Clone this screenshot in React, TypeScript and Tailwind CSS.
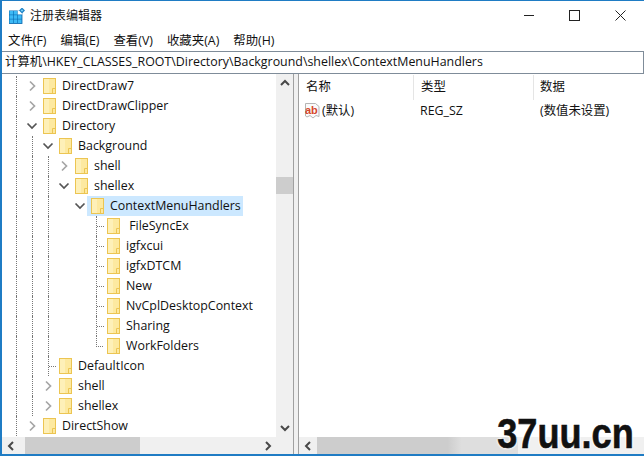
const font = "font-['Open_Sans','Noto_Sans_CJK_SC',sans-serif]";

function Folder() {
  return (
    <svg width="13" height="16" viewBox="0 0 13 16" className="shrink-0">
      <rect x="0.5" y="0.5" width="12" height="15" fill="#fde9a0" stroke="#ecc552" />
      <rect x="1" y="1" width="5" height="14" fill="#fef0b8" />
      <path d="M9.5 15V10.5H12.5" fill="none" stroke="#ecc552" />
    </svg>
  );
}

function Chevron({ open }: { open?: boolean }) {
  return (
    <svg width="16" height="16" viewBox="0 0 16 16" className="block bg-white">
      {open ? (
        <path d="M3.5 5.5L8 10L12.5 5.5" fill="none" stroke="#555" strokeWidth="1.7" />
      ) : (
        <path d="M6 3.5L10.5 8L6 12.5" fill="none" stroke="#a6a6a6" strokeWidth="1.7" />
      )}
    </svg>
  );
}

type Row = {
  label: string;
  level: number;
  guides: number[];
  state?: "open" | "closed" | "leaf";
  selected?: boolean;
  last?: boolean;
};

const rows: Row[] = [
  { label: "DirectDraw7", level: 0, guides: [0], state: "closed" },
  { label: "DirectDrawClipper", level: 0, guides: [0], state: "closed" },
  { label: "Directory", level: 0, guides: [0], state: "open" },
  { label: "Background", level: 1, guides: [0, 1], state: "open" },
  { label: "shell", level: 2, guides: [0, 1, 2], state: "closed" },
  { label: "shellex", level: 2, guides: [0, 1, 2], state: "open" },
  { label: "ContextMenuHandlers", level: 3, guides: [0, 1, 2], state: "open", selected: true },
  { label: "\u00a0FileSyncEx", level: 4, guides: [0, 1, 2], state: "leaf" },
  { label: "igfxcui", level: 4, guides: [0, 1, 2], state: "leaf" },
  { label: "igfxDTCM", level: 4, guides: [0, 1, 2], state: "leaf" },
  { label: "New", level: 4, guides: [0, 1, 2], state: "leaf" },
  { label: "NvCplDesktopContext", level: 4, guides: [0, 1, 2], state: "leaf" },
  { label: "Sharing", level: 4, guides: [0, 1, 2], state: "leaf" },
  { label: "WorkFolders", level: 4, guides: [0, 1, 2], state: "leaf", last: true },
  { label: "DefaultIcon", level: 1, guides: [0, 1], state: "leaf" },
  { label: "shell", level: 1, guides: [0, 1], state: "closed" },
  { label: "shellex", level: 1, guides: [0, 1], state: "closed" },
  { label: "DirectShow", level: 0, guides: [0], state: "closed" },
];

function TreeRow({ row }: { row: Row }) {
  const cells = [];
  for (let i = 0; i <= row.level; i++) {
    cells.push(
      <div key={i} className="w-4 h-5 shrink-0">
        {row.guides.includes(i) && <div className="ml-2 w-0 h-5 border-l border-dotted border-[#777]" />}
      </div>
    );
  }
  return (
    <div className="flex h-5 items-center pl-[6px] text-[12.4px] text-[#111]">
      {cells}
      <div className="w-4 h-5 shrink-0 flex items-center justify-center">
        {row.state === "open" && <Chevron open />}
        {row.state === "closed" && <Chevron />}
        {row.state === "leaf" && (
          <div className="w-4 h-5 shrink-0 pl-2">
            <div
              className={
                row.last
                  ? "w-[7px] h-[11px] border-l border-b border-dotted border-[#777]"
                  : "w-[7px] h-5 border-l border-dotted border-[#777]"
              }
            >
              {!row.last && <div className="w-[7px] h-[11px] border-b border-dotted border-[#777]" />}
            </div>
          </div>
        )}
      </div>
      <div className={row.selected ? "flex h-5 items-center -ml-[1px] pl-[4px] pr-[2px] bg-[#cce8ff]" : "flex h-5 items-center ml-[3px]"}>
        <Folder />
        <span className="ml-[6px] whitespace-nowrap leading-5">{row.label}</span>
      </div>
    </div>
  );
}

function Arrow({ dir }: { dir: "u" | "d" | "l" | "r" }) {
  const d = {
    u: "M2 8L6 4L10 8",
    d: "M2 4L6 8L10 4",
    l: "M8 2L4 6L8 10",
    r: "M4 2L8 6L4 10",
  }[dir];
  return (
    <svg width="12" height="12" viewBox="0 0 12 12" className="shrink-0">
      <path d={d} fill="none" stroke="#484848" strokeWidth="2" />
    </svg>
  );
}

function RegIcon() {
  return (
    <svg width="16" height="16" viewBox="0 0 16 16" className="shrink-0">
      <path d="M1.5 0.5H11.5L15 3.5V13.5L12 12.5L9 15L6 12.5L3 14L1.5 13Z" fill="#fafafa" stroke="#b5b5b5" />
      <text x="1" y="10.5" fontSize="11" fontWeight="700" fill="#d6472c" fontFamily="'Liberation Sans',sans-serif">ab</text>
    </svg>
  );
}

function AppIcon() {
  const cells = [];
  for (let y = 0; y < 3; y++) {
    for (let x = 0; x < 3; x++) {
      if (y === 0 && x === 2) continue;
      cells.push(<rect key={`${x}${y}`} x={0.5 + x * 4.2} y={3 + y * 4.2} width="3.6" height="3.6" fill="#3db9f5" />);
    }
  }
  return (
    <svg width="16" height="16" viewBox="0 0 16 16" className="shrink-0">
      <rect x="0" y="2.5" width="13.4" height="13.4" fill="#0b6cb3" />
      <rect x="8.6" y="2.5" width="4.8" height="4" fill="#ffffff" />
      {cells}
      <path d="M13 -0.5L16 2.5L13 5.5L10 2.5Z" fill="#1d82c6" />
      <path d="M13 1.2L14.3 2.5L13 3.8L11.7 2.5Z" fill="#7fd0f7" />
    </svg>
  );
}

export default function App() {
  return (
    <div className={`${font} relative w-[644px] h-[456px] overflow-hidden bg-white border-t border-l-2 border-[#1f7cc4] text-[#111]`}>
      <div className="flex h-[30px] items-center pl-[7px]">
        <AppIcon />
        <span className="ml-[5px] text-[12px] leading-none">注册表编辑器</span>
        <div className="ml-auto flex items-center pr-[18px] -mt-[1px]">
          <div className="w-[10px] h-px bg-[#222] mr-[35px]" />
          <div className="w-[11px] h-[11px] border border-[#222] mr-[35px]" />
          <svg width="11" height="11" viewBox="0 0 11 11">
            <path d="M0.5 0.5L10.5 10.5M10.5 0.5L0.5 10.5" stroke="#222" />
          </svg>
        </div>
      </div>
      <div className="flex h-5 items-center pl-[6px] gap-[14px] text-[12.4px] pt-px">
        <span>文件(F)</span>
        <span>编辑(E)</span>
        <span>查看(V)</span>
        <span>收藏夹(A)</span>
        <span>帮助(H)</span>
      </div>
      <div className="flex h-[23px] items-center border border-[#7f8c99] pl-1 text-[12.4px] whitespace-nowrap -ml-[2px]">
        计算机\HKEY_CLASSES_ROOT\Directory\Background\shellex\ContextMenuHandlers
      </div>
      <div className="flex h-[380px] bg-[#f0f0f0]">
        <div className="flex w-[291px] shrink-0">
          <div className="flex flex-col w-[291px]">
            <div className="flex h-[363px]">
              <div className="w-[274px] bg-white overflow-hidden pt-[2px]">
                {rows.map((r, i) => (
                  <TreeRow key={i} row={r} />
                ))}
              </div>
              <div className="flex-1 flex flex-col items-center py-[3px] bg-[#f0f0f0]">
                <Arrow dir="u" />
                <div className="h-[88px] shrink-0" />
                <div className="w-full h-[17px] bg-[#cdcdcd] shrink-0" />
                <div className="flex-1" />
                <Arrow dir="d" />
              </div>
            </div>
            <div className="flex h-[17px] items-center pl-[3px] pr-[19px] bg-[#f0f0f0]">
              <Arrow dir="l" />
              <div className="ml-[8px] w-[115px] h-full bg-[#cdcdcd]" />
              <div className="flex-1" />
              <Arrow dir="r" />
            </div>
          </div>
        </div>
        <div className="w-[5px] shrink-0 border-l border-[#a0a0a0] bg-[#f0f0f0]" />
        <div className="flex-1 flex flex-col border-l border-[#a0a0a0] bg-white">
          <div className="flex h-[26px] text-[12.4px] pt-px">
            <div className="w-[115px] pl-[7px] flex items-center border-r border-[#e5e5e5]">名称</div>
            <div className="w-[120px] pl-[7px] flex items-center border-r border-[#e5e5e5]">类型</div>
            <div className="pl-[6px] flex items-center">数据</div>
          </div>
          <div className="flex h-5 items-center text-[12.4px] pl-[5px] mt-px">
            <RegIcon />
            <span className="ml-[2px] w-[98px]">(默认)</span>
            <span className="w-[120px]">REG_SZ</span>
            <span>(数值未设置)</span>
          </div>
          <div className="flex-1" />
          <div className="flex h-[17px] items-center pl-[3px] bg-[#f0f0f0]">
            <Arrow dir="l" />
            <div className="ml-[3px] w-[201px] h-full bg-[linear-gradient(to_right,#cdcdcd_65%,#dedede_72%)]" />
          </div>
        </div>
      </div>
      <div className="h-[2px] bg-[#1f7cc4]" />
      <div className="absolute right-[10px] bottom-[-2px] text-[42px] leading-[48px] font-bold text-[#111] font-['Liberation_Sans',sans-serif] origin-right scale-x-[0.86] [-webkit-text-stroke:0.6px_#111] [text-shadow:0_0_3px_#fff,0_0_3px_#fff,0_0_3px_#fff]">
        37uu.cn
      </div>
    </div>
  );
}
